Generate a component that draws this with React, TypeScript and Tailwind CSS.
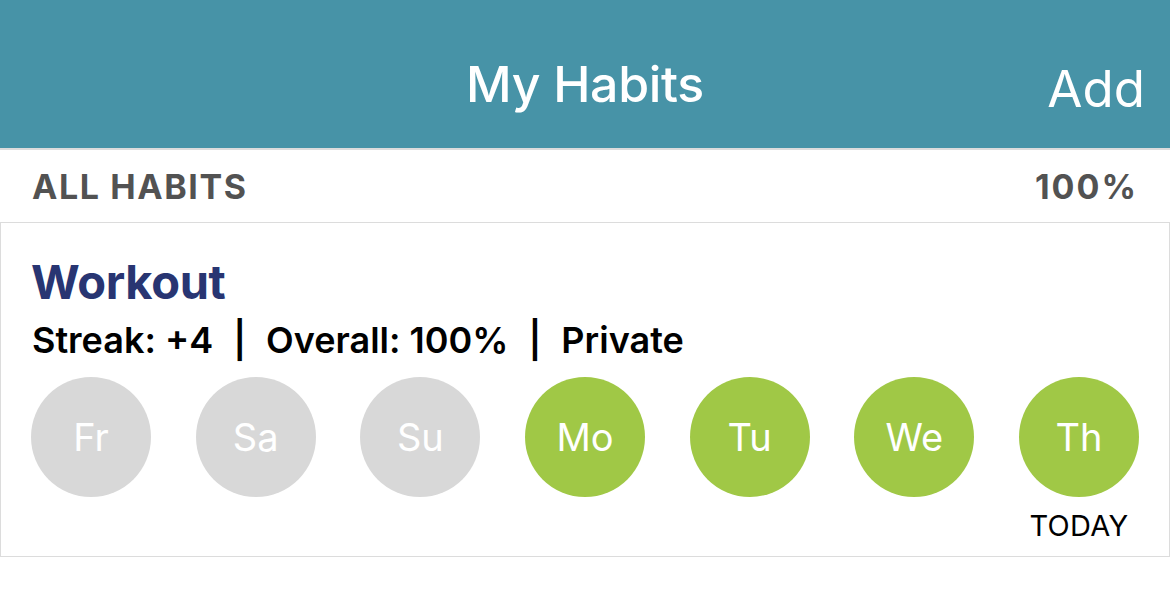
import React from "react";

const days = [
  { d: "Fr", done: false },
  { d: "Sa", done: false },
  { d: "Su", done: false },
  { d: "Mo", done: true },
  { d: "Tu", done: true },
  { d: "We", done: true },
  { d: "Th", done: true, today: true },
];

function Sep() {
  return <span className="mx-[20px]">|</span>;
}

export default function App() {
  return (
    <div
      className="w-[1170px] h-[598px] bg-white overflow-hidden"
      style={{ fontFamily: "Inter, 'Noto Sans', sans-serif" }}
    >
      <header className="h-[150px] bg-[#4793a7] border-b-2 border-[#dcdcdc] flex items-center relative">
        <div className="flex-1 flex justify-center pt-[20px]">
          <span className="text-white text-[50px] font-medium leading-none tracking-[-0.3px]">My Habits</span>
        </div>
        <span className="absolute right-[25px] top-[63px] text-white text-[51px] leading-none">Add</span>
      </header>
      <div className="h-[73px] flex items-center justify-between pl-[32px] pr-[32px] border-b border-[#dcdcdc]">
        <span className="text-[#525252] text-[34px] font-bold tracking-[1.6px]">ALL HABITS</span>
        <span className="text-[#525252] text-[34px] font-bold tracking-[2px]">100%</span>
      </div>
      <div className="h-[334px] border border-t-0 border-[#dcdcdc] pl-[30px] pr-[30px]">
        <div className="pt-[35px] text-[#283572] text-[47px] font-bold leading-none tracking-[-0.3px]">
          Workout
        </div>
        <div className="pt-[17px] pl-[1px] text-black text-[36px] font-semibold leading-none whitespace-pre">
          Streak: +4<Sep />Overall: 100%<Sep />Private
        </div>
        <div className="mt-[19px] flex justify-between">
          {days.map((x) => (
            <div key={x.d} className="flex flex-col items-center">
              <div
                className={
                  "w-[120px] h-[120px] rounded-full flex items-center justify-center text-white text-[38px] " +
                  (x.done ? "bg-[#a0c846]" : "bg-[#d8d8d8]")
                }
              >
                {x.d}
              </div>
              {x.today ? (
                <div className="mt-[14px] text-black text-[29px] leading-none tracking-[0.3px]">TODAY</div>
              ) : null}
            </div>
          ))}
        </div>
      </div>
    </div>
  );
}
